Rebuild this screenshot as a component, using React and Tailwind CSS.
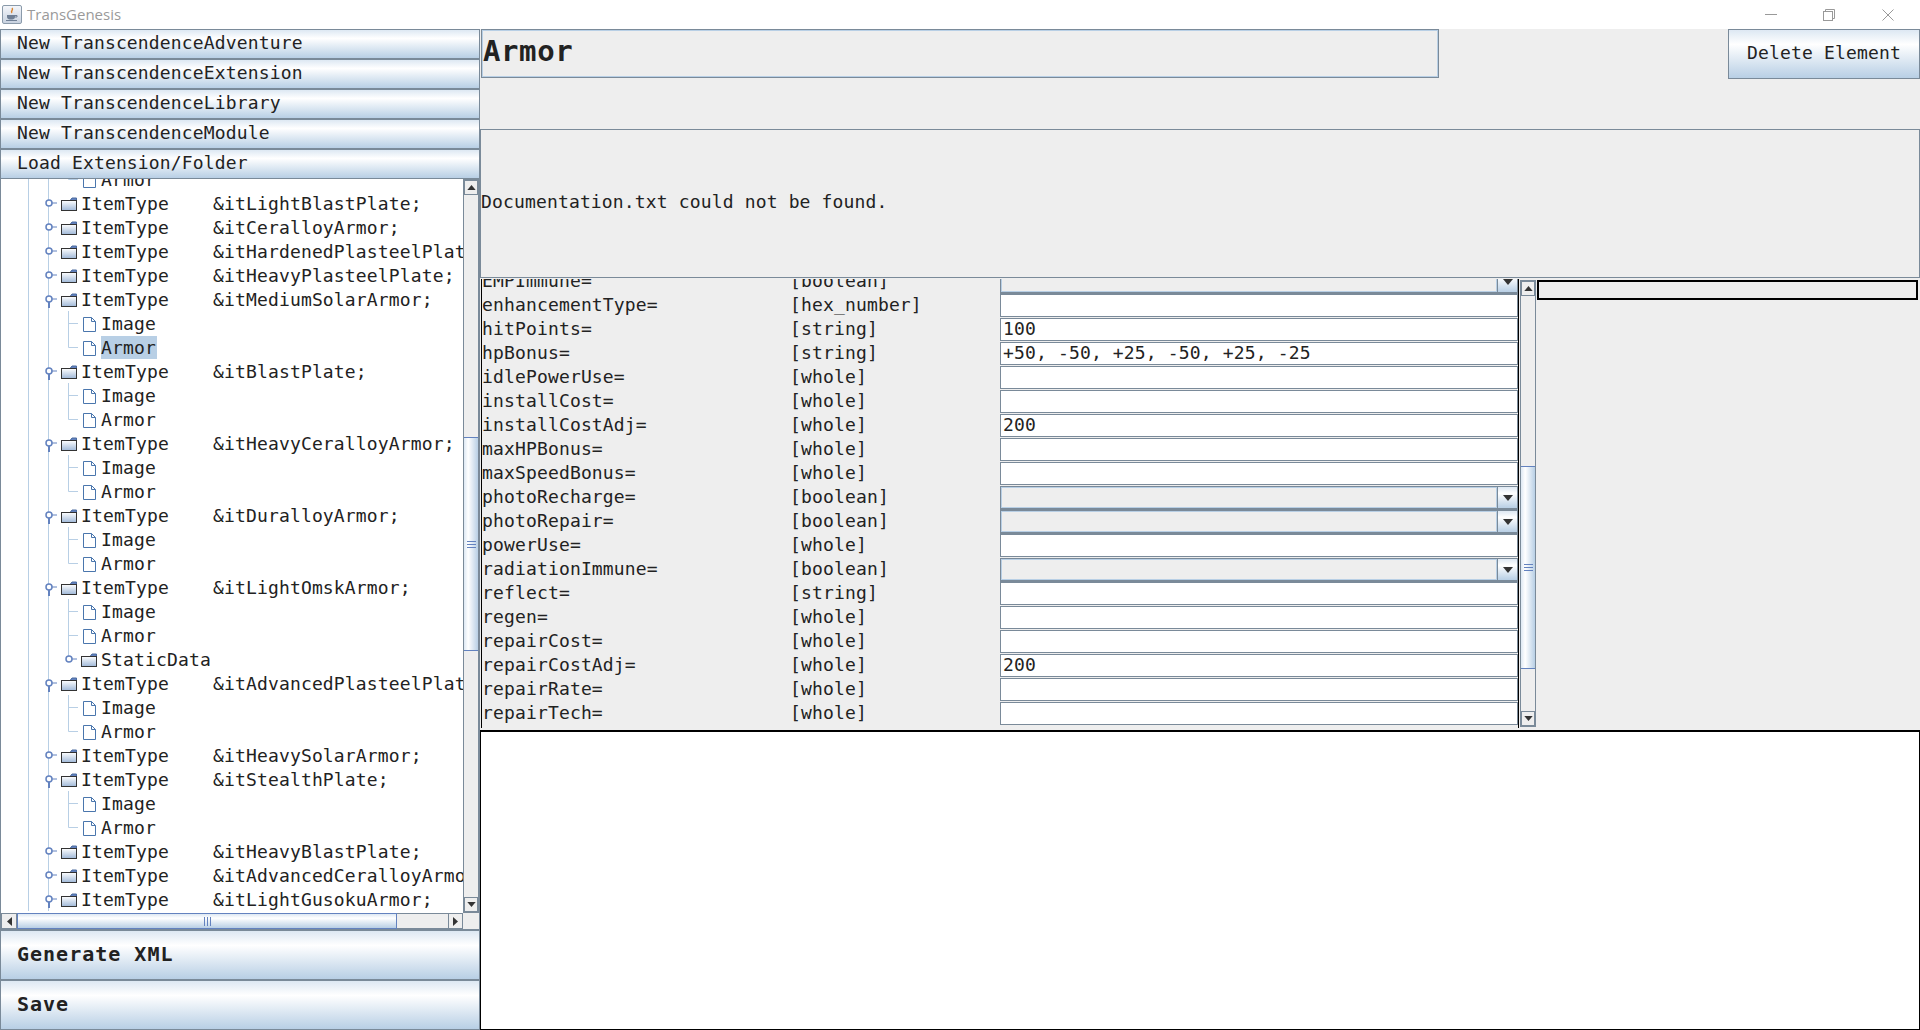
import React from 'react';

const oceanV = 'bg-[linear-gradient(180deg,#dde8f3_0%,#ffffff_30%,#b8cfe5_100%)]';
const oceanH = 'bg-[linear-gradient(90deg,#dde8f3_0%,#ffffff_30%,#b8cfe5_100%)]';

const treeRows = [
  { kind: 'leaf', name: 'Armor', last: true },
  { kind: 'closed', ref: '&itLightBlastPlate;' },
  { kind: 'closed', ref: '&itCeralloyArmor;' },
  { kind: 'closed', ref: '&itHardenedPlasteelPlate;' },
  { kind: 'closed', ref: '&itHeavyPlasteelPlate;' },
  { kind: 'open', ref: '&itMediumSolarArmor;' },
  { kind: 'leaf', name: 'Image' },
  { kind: 'leaf', name: 'Armor', last: true, selected: true },
  { kind: 'open', ref: '&itBlastPlate;' },
  { kind: 'leaf', name: 'Image' },
  { kind: 'leaf', name: 'Armor', last: true },
  { kind: 'open', ref: '&itHeavyCeralloyArmor;' },
  { kind: 'leaf', name: 'Image' },
  { kind: 'leaf', name: 'Armor', last: true },
  { kind: 'open', ref: '&itDuralloyArmor;' },
  { kind: 'leaf', name: 'Image' },
  { kind: 'leaf', name: 'Armor', last: true },
  { kind: 'open', ref: '&itLightOmskArmor;' },
  { kind: 'leaf', name: 'Image' },
  { kind: 'leaf', name: 'Armor' },
  { kind: 'sub', name: 'StaticData' },
  { kind: 'open', ref: '&itAdvancedPlasteelPlate;' },
  { kind: 'leaf', name: 'Image' },
  { kind: 'leaf', name: 'Armor', last: true },
  { kind: 'closed', ref: '&itHeavySolarArmor;' },
  { kind: 'open', ref: '&itStealthPlate;' },
  { kind: 'leaf', name: 'Image' },
  { kind: 'leaf', name: 'Armor', last: true },
  { kind: 'closed', ref: '&itHeavyBlastPlate;' },
  { kind: 'closed', ref: '&itAdvancedCeralloyArmor;' },
  { kind: 'open', ref: '&itLightGusokuArmor;' },
];

const attrs = [
  ['EMPImmune=', '[boolean]', 'select'],
  ['enhancementType=', '[hex_number]', ''],
  ['hitPoints=', '[string]', '100'],
  ['hpBonus=', '[string]', '+50, -50, +25, -50, +25, -25'],
  ['idlePowerUse=', '[whole]', ''],
  ['installCost=', '[whole]', ''],
  ['installCostAdj=', '[whole]', '200'],
  ['maxHPBonus=', '[whole]', ''],
  ['maxSpeedBonus=', '[whole]', ''],
  ['photoRecharge=', '[boolean]', 'select'],
  ['photoRepair=', '[boolean]', 'select'],
  ['powerUse=', '[whole]', ''],
  ['radiationImmune=', '[boolean]', 'select'],
  ['reflect=', '[string]', ''],
  ['regen=', '[whole]', ''],
  ['repairCost=', '[whole]', ''],
  ['repairCostAdj=', '[whole]', '200'],
  ['repairRate=', '[whole]', ''],
  ['repairTech=', '[whole]', ''],
];

const Folder = ({ x }) => (
  <g transform={`translate(${x} 0)`}>
    <path d="M0.5 9.5 H9 L11 7 H15.5 V9.5" fill="#6382bf" stroke="#4a6a9f" />
    <rect x="0.5" y="9.5" width="15" height="10" fill="url(#folderFill)" stroke="#333333" />
  </g>
);

const Handle = ({ x, open }) => (
  <g>
    {open ? (
      <line x1={x} y1="12" x2={x} y2="21" stroke="#6382bf" strokeWidth="2" />
    ) : null}
    <line x1={x} y1="12" x2={x + 8} y2="12" stroke="#6382bf" />
    <circle cx={x} cy="12" r="3" fill="#ffffff" stroke="#6382bf" strokeWidth="1.5" />
  </g>
);

const TreeGlyph = ({ row }) => {
  const leaf = row.kind === 'leaf';
  const sub = row.kind === 'sub';
  const width = leaf || sub ? 101 : 81;
  return (
    <svg width={width} height="24" className="shrink-0">
      <defs>
        <linearGradient id="folderFill" x1="0" y1="0" x2="0" y2="1">
          <stop offset="0" stopColor="#ffffff" />
          <stop offset="1" stopColor="#9fb8d8" />
        </linearGradient>
      </defs>
      <line x1="28.5" y1="0" x2="28.5" y2="24" stroke="#b8cfe5" />
      <line x1="48.5" y1="0" x2="48.5" y2="24" stroke="#b8cfe5" />
      {leaf && (
        <g>
          <line x1="68.5" y1="0" x2="68.5" y2={row.last ? 12.5 : 24} stroke="#b8cfe5" />
          <line x1="68.5" y1="12.5" x2="78" y2="12.5" stroke="#b8cfe5" />
          <path d="M83.5 6.5 H91.5 L95.5 10.5 V20.5 H83.5 Z" fill="#ffffff" stroke="#4a76ad" />
          <path d="M91.5 6.5 V10.5 H95.5" fill="none" stroke="#4a76ad" />
        </g>
      )}
      {sub && (
        <g>
          <line x1="68.5" y1="0" x2="68.5" y2="12" stroke="#b8cfe5" />
          <Handle x={69} />
          <Folder x={81} />
        </g>
      )}
      {(row.kind === 'closed' || row.kind === 'open') && (
        <g>
          <Handle x={49} open={row.kind === 'open'} />
          <Folder x={61} />
        </g>
      )}
    </svg>
  );
};

const TreeRow = ({ row }) => (
  <div className="-ml-px flex h-6 items-center whitespace-pre">
    <TreeGlyph row={row} />
    {row.ref ? (
      <>
        <span className="w-[132px] shrink-0">ItemType</span>
        <span>{row.ref}</span>
      </>
    ) : (
      <span className={row.selected ? 'bg-[#b8cfe5] pr-px h-[23px] leading-[23px]' : ''}>{row.name}</span>
    )}
  </div>
);

const Triangle = ({ dir = 'down', big }) => (
  <svg width={big ? 10 : 9} height={big ? 6 : 5} viewBox="0 0 10 6">
    <path d={dir === 'down' ? 'M0 0 H10 L5 6 Z' : dir === 'up' ? 'M0 6 H10 L5 0 Z' : ''} fill="#333333" />
  </svg>
);

const ScrollBtn = ({ dir }) => (
  <div className="flex h-[15px] shrink-0 items-center justify-center border border-[#7a8a99] bg-[#eeeeee]">
    <Triangle dir={dir} />
  </div>
);

const VScrollbar = ({ before, thumb }) => (
  <div className="flex h-full w-[16px] flex-col border border-[#7a8a99] bg-[#eeeeee]">
    <ScrollBtn dir="up" />
    <div style={{ height: before }} className="shrink-0" />
    <div
      style={{ height: thumb }}
      className={`flex shrink-0 flex-col items-center justify-center gap-[2px] border-y border-[#6382bf] ${oceanH}`}
    >
      <div className="h-px w-[9px] bg-[#6382bf]" />
      <div className="h-px w-[9px] bg-[#6382bf]" />
      <div className="h-px w-[9px] bg-[#6382bf]" />
    </div>
    <div className="flex-1" />
    <ScrollBtn dir="down" />
  </div>
);

const AttrRow = ({ attr }) => {
  const [name, type, value] = attr;
  return (
    <div className="flex h-6 items-center whitespace-pre">
      <span className="w-[308px] shrink-0 pb-[2px]">{name}</span>
      <span className="w-[210px] shrink-0 pb-[2px]">{type}</span>
      {value === 'select' ? (
        <div className="mt-[2px] flex h-[24px] w-[518px] border border-b-2 border-[#7a8a99] bg-[#eeeeee]">
          <div className="flex-1 border border-[#b8cfe5]" />
          <div className={`flex w-[20px] items-center justify-center border-l border-[#7a8a99] ${oceanV}`}>
            <Triangle dir="down" big />
          </div>
        </div>
      ) : (
        <div className="flex h-[23px] w-[518px] items-center border border-[#7a8a99] bg-white pb-[2px] pl-[2px]">{value}</div>
      )}
    </div>
  );
};

export default function App() {
  return (
    <div className="flex h-[1030px] w-[1920px] flex-col overflow-hidden bg-[#eeeeee] font-['DejaVu_Sans_Mono',monospace] text-[18px] tracking-[0.15px] text-[#222222]">
      {/* window title bar */}
      <div className="flex h-[29px] shrink-0 items-center bg-white">
        <div className="ml-[2px] flex h-[19px] w-[20px] items-center justify-center rounded-[2px] border border-[#8a9aaa] bg-[linear-gradient(180deg,#f4f6fa,#c8d2e0)]">
          <svg width="14" height="15" viewBox="0 0 14 15">
            <path d="M7 1 C9 3 5 4 7 6" fill="none" stroke="#d9822b" strokeWidth="1.4" />
            <path d="M2 8 H10 V10 C10 12 8 12.5 6 12.5 C4 12.5 2 12 2 10 Z" fill="#6f7f95" />
            <path d="M10 8.5 H12 V10 H10" fill="none" stroke="#6f7f95" />
            <path d="M1 13.5 H12" stroke="#6f7f95" />
          </svg>
        </div>
        <span className="ml-[5px] font-['Open_Sans',sans-serif] text-[15px] tracking-normal text-[#9a9a9a]">TransGenesis</span>
        <div className="ml-auto flex items-center pr-[26px]">
          <svg width="12" height="12" className="mr-[46px]">
            <line x1="0" y1="5.5" x2="12" y2="5.5" stroke="#999999" />
          </svg>
          <svg width="12" height="12" className="mr-[47px]">
            <rect x="0.5" y="2.5" width="9" height="9" fill="#ffffff" stroke="#999999" />
            <path d="M2.5 2.5 V0.5 H11.5 V9.5 H9.5" fill="none" stroke="#999999" />
          </svg>
          <svg width="12" height="12">
            <path d="M0.5 0.5 L11.5 11.5 M11.5 0.5 L0.5 11.5" stroke="#999999" />
          </svg>
        </div>
      </div>

      <div className="flex min-h-0 flex-1">
        {/* left column */}
        <div className="flex w-[480px] shrink-0 flex-col">
          {['New TranscendenceAdventure', 'New TranscendenceExtension', 'New TranscendenceLibrary', 'New TranscendenceModule', 'Load Extension/Folder'].map((label) => (
            <div key={label} className={`flex h-[30px] shrink-0 items-center whitespace-pre border border-[#7a8a99] pb-[3px] pl-4 ${oceanV}`}>
              {label}
            </div>
          ))}
          <div className="flex h-[734px] shrink-0 border-x border-[#7a8a99] bg-white">
            <div className="min-w-0 flex-1 overflow-hidden">
              <div className="-mt-[12px]">
                {treeRows.map((row, i) => (
                  <TreeRow key={i} row={row} />
                ))}
              </div>
            </div>
            <div className="w-[16px] shrink-0">
              <VScrollbar before={242} thumb={214} />
            </div>
          </div>
          <div className="flex h-[17px] shrink-0 border-x border-b border-[#7a8a99] bg-[#eeeeee]">
            <div className="flex w-[16px] items-center justify-center border border-[#7a8a99]">
              <svg width="5" height="9"><path d="M5 0 V9 L0 4.5 Z" fill="#333333" /></svg>
            </div>
            <div className={`flex w-[380px] items-center justify-center gap-[2px] border border-[#6382bf] ${oceanV}`}>
              <div className="h-[9px] w-px bg-[#6382bf]" />
              <div className="h-[9px] w-px bg-[#6382bf]" />
              <div className="h-[9px] w-px bg-[#6382bf]" />
            </div>
            <div className="w-[51px] border-y border-[#7a8a99]" />
            <div className="flex w-[15px] items-center justify-center border border-[#7a8a99]">
              <svg width="5" height="9"><path d="M0 0 V9 L5 4.5 Z" fill="#333333" /></svg>
            </div>
          </div>
          <div className={`flex h-[50px] shrink-0 items-center border border-[#7a8a99] pb-[3px] pl-4 text-[20px] font-bold tracking-[1px] ${oceanV}`}>
            Generate XML
          </div>
          <div className={`flex h-[50px] shrink-0 items-center border border-[#7a8a99] pb-[3px] pl-4 text-[20px] font-bold tracking-[1px] ${oceanV}`}>
            Save
          </div>
        </div>

        {/* right column */}
        <div className="flex min-w-0 flex-1 flex-col">
          <div className="flex h-[50px] shrink-0">
            <div className="ml-px flex h-[49px] w-[958px] items-center border border-[#7a8a99] pb-[4px] pl-px text-[29px] font-bold tracking-[0.6px] shadow-[inset_0_0_0_1px_#b8cfe5]">
              Armor
            </div>
            <div className={`ml-auto flex w-[192px] items-center justify-center border border-[#7a8a99] pb-[3px] ${oceanV}`}>
              Delete Element
            </div>
          </div>
          <div className="h-[50px] shrink-0" />
          <div className="flex h-[149px] shrink-0 items-center border border-[#7a8a99] pb-[4px]">
            Documentation.txt could not be found.
          </div>
          <div className="flex h-[452px] shrink-0 pl-px">
            <div className="mt-px mb-[2px] flex w-[1038px] shrink-0 flex-col overflow-hidden border-x border-black pl-0">
              <div className="-mt-[10px]">
                {attrs.map((attr) => (
                  <AttrRow key={attr[0]} attr={attr} />
                ))}
              </div>
            </div>
            <div className="mt-[2px] mb-[3px] ml-px shrink-0">
              <VScrollbar before={170} thumb={203} />
            </div>
            <div className="mt-[2px] ml-px h-[20px] w-[381px] border-2 border-black" />
          </div>
          <div className="min-h-0 flex-1 border border-t-2 border-black bg-white" />
        </div>
      </div>
    </div>
  );
}
